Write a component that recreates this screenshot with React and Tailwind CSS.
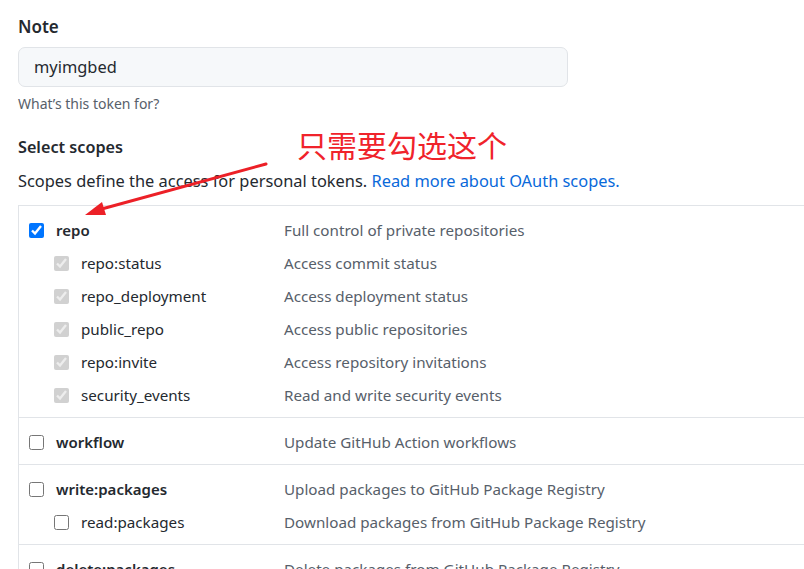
import React from 'react'

const GROUPS = [
  {
    name: 'repo',
    desc: 'Full control of private repositories',
    checked: true,
    subs: [
      { name: 'repo:status', desc: 'Access commit status' },
      { name: 'repo_deployment', desc: 'Access deployment status' },
      { name: 'public_repo', desc: 'Access public repositories' },
      { name: 'repo:invite', desc: 'Access repository invitations' },
      { name: 'security_events', desc: 'Read and write security events' },
    ],
  },
  { name: 'workflow', desc: 'Update GitHub Action workflows', subs: [] },
  {
    name: 'write:packages',
    desc: 'Upload packages to GitHub Package Registry',
    subs: [{ name: 'read:packages', desc: 'Download packages from GitHub Package Registry', open: true }],
  },
  { name: 'delete:packages', desc: 'Delete packages from GitHub Package Registry', subs: [] },
]

function Box({ checked, disabled }) {
  return (
    <input
      type="checkbox"
      readOnly
      checked={!!checked}
      disabled={disabled}
      className="w-[15px] h-[15px] m-0 shrink-0"
    />
  )
}

export default function App() {
  return (
    <div
      className="relative w-[804px] h-[569px] overflow-hidden bg-white text-[#24292f]"
      style={{ fontFamily: '"Segoe UI", "Noto Sans", sans-serif' }}
    >
      <div className="pl-[18px] pt-[14px]">
        {/* Note */}
        <p className="text-[17px] font-semibold leading-[26px]">Note</p>
        <div className="mt-[7px] w-[550px] h-[40px] rounded-[7px] border border-[#e1e4e8] bg-[#f6f8fa] flex items-center px-[15px] text-[16.4px]">
          myimgbed
        </div>
        <p className="mt-[7px] text-[14px] text-[#57606a] leading-[20px]">What’s this token for?</p>

        {/* Scopes */}
        <p className="mt-[20px] text-[16.2px] font-semibold leading-[26px]">Select scopes</p>
        <p className="mt-[9px] text-[16.4px] leading-[24px]">
          Scopes define the access for personal tokens.{' '}
          <span className="text-[#0969da]">Read more about OAuth scopes.</span>
        </p>

        <div className="mt-[12px] border-l border-t border-[#e1e4e8] w-[900px]">
          {GROUPS.map((g) => (
            <div key={g.name} className="border-b border-[#e1e4e8] pt-[8px] pb-[5px]">
              <div className="h-[33px] flex items-center">
                <div className="w-[265px] flex items-center pl-[10px] gap-[12px]">
                  <Box checked={g.checked} />
                  <span className="text-[15px] font-semibold">{g.name}</span>
                </div>
                <span className="text-[15.2px] text-[#57606a]">{g.desc}</span>
              </div>
              {g.subs.map((s) => (
                <div key={s.name} className="h-[33px] flex items-center">
                  <div className="w-[265px] flex items-center pl-[35px] gap-[12px]">
                    <Box checked={!s.open} disabled={!s.open} />
                    <span className="text-[15.2px]">{s.name}</span>
                  </div>
                  <span className="text-[15.2px] text-[#57606a]">{s.desc}</span>
                </div>
              ))}
            </div>
          ))}
        </div>
      </div>

      {/* annotation */}
      <p
        className="absolute left-[297px] top-[124px] text-[30px] leading-[40px] text-[#f0232b]"
        style={{ fontFamily: '"Noto Sans CJK SC", sans-serif' }}
      >
        只需要勾选这个
      </p>
      <svg className="absolute left-0 top-0" width="804" height="569">
        <line x1="266" y1="164" x2="98" y2="210" stroke="#ec2027" strokeWidth="3" strokeLinecap="round" />
        <polygon points="85,215 102,202 106,215" fill="#ec2027" />
      </svg>
    </div>
  )
}
